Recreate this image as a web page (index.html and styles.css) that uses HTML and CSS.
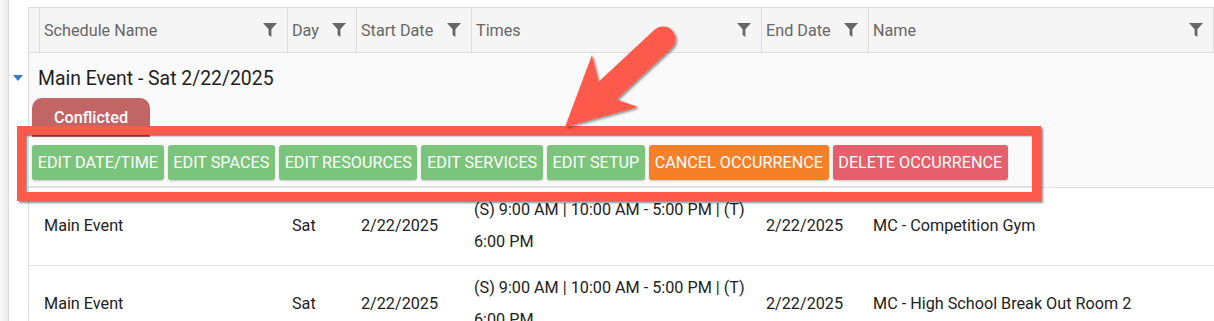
FILE: index.html
```html
<!DOCTYPE html>
<html>
<head>
<meta charset="utf-8">
<title>Occurrences</title>
<link rel="stylesheet" href="styles.css">
</head>
<body>
<div class="page">
  <div class="rail"></div>
  <div class="main">
    <div class="grid">
      <!-- header -->
      <div class="row head">
        <div class="cell"></div>
        <div class="cell">Schedule Name <svg class="filter" viewBox="0 0 14 14"><path d="M0 0H14L8.4 6.2V14L5.6 12V6.2Z"/></svg></div>
        <div class="cell">Day <svg class="filter" viewBox="0 0 14 14"><path d="M0 0H14L8.4 6.2V14L5.6 12V6.2Z"/></svg></div>
        <div class="cell">Start Date <svg class="filter" viewBox="0 0 14 14"><path d="M0 0H14L8.4 6.2V14L5.6 12V6.2Z"/></svg></div>
        <div class="cell">Times <svg class="filter" viewBox="0 0 14 14"><path d="M0 0H14L8.4 6.2V14L5.6 12V6.2Z"/></svg></div>
        <div class="cell">End Date <svg class="filter" viewBox="0 0 14 14"><path d="M0 0H14L8.4 6.2V14L5.6 12V6.2Z"/></svg></div>
        <div class="cell">Name <svg class="filter" viewBox="0 0 14 14"><path d="M0 0H14L8.4 6.2V14L5.6 12V6.2Z"/></svg></div>
      </div>

      <!-- group -->
      <div class="group">
        <div class="group-title"><span class="caret"></span>Main Event - Sat 2/22/2025</div>
        <div class="tab">Conflicted</div>
        <div class="toolbar">
          <button class="btn green">Edit Date/Time</button>
          <button class="btn green">Edit Spaces</button>
          <button class="btn green">Edit Resources</button>
          <button class="btn green">Edit Services</button>
          <button class="btn green">Edit Setup</button>
          <button class="btn orange">Cancel Occurrence</button>
          <button class="btn pink">Delete Occurrence</button>
        </div>
      </div>

      <!-- rows -->
      <div class="row data">
        <div class="cell"></div>
        <div class="cell">Main Event</div>
        <div class="cell">Sat</div>
        <div class="cell">2/22/2025</div>
        <div class="cell times">(S) 9:00 AM | 10:00 AM - 5:00 PM | (T) 6:00 PM</div>
        <div class="cell">2/22/2025</div>
        <div class="cell">MC - Competition Gym</div>
      </div>
      <div class="row data">
        <div class="cell"></div>
        <div class="cell">Main Event</div>
        <div class="cell">Sat</div>
        <div class="cell">2/22/2025</div>
        <div class="cell times">(S) 9:00 AM | 10:00 AM - 5:00 PM | (T) 6:00 PM</div>
        <div class="cell">2/22/2025</div>
        <div class="cell">MC - High School Break Out Room 2</div>
      </div>
    </div>
  </div>
</div>

<!-- annotation -->
<div class="callout"></div>
<svg class="arrow" viewBox="540 15 160 125" width="160" height="125">
  <defs>
    <filter id="sh" x="-20%" y="-20%" width="140%" height="140%">
      <feDropShadow dx="1.5" dy="1.5" stdDeviation="1.2" flood-color="#000" flood-opacity="0.45"/>
    </filter>
  </defs>
  <g filter="url(#sh)" fill="#fd5a4b">
    <line x1="663" y1="39" x2="606" y2="92" stroke="#fd5a4b" stroke-width="25" stroke-linecap="round"/>
    <polygon points="592,55 599,83 618,100 638,107 565,127"/>
  </g>
</svg>
</body>
</html>
```

FILE: styles.css
```css
body {
  margin: 0;
  font-family: Roboto, "Liberation Sans", sans-serif;
  font-size: 16.2px;
  color: #222;
  background: #fff;
  overflow: hidden;
}

.page {
  display: flex;
  padding-top: 7px;
  height: 314px;
  overflow: hidden;
}

.rail {
  width: 8px;
  margin-top: -7px;
  background: linear-gradient(to right, #f7f7f7, #ececec);
  border-right: 1px solid #dcdcdc;
  flex: none;
}

.main {
  flex: 1;
  padding-left: 19px;
}

.grid {
  border-left: 1px solid #dcdcdc;
  border-top: 1px solid #dcdcdc;
}

.row {
  display: grid;
  grid-template-columns: 11px 248px 69px 115px 290px 107px 1fr;
}

.cell {
  box-sizing: border-box;
  padding: 0 4px;
  display: flex;
  align-items: center;
}

.head {
  height: 44px;
  background: #f5f5f5;
  border-bottom: 1px solid #dcdcdc;
  color: #676767;
}
.head .cell {
  border-right: 1px solid #dcdcdc;
  justify-content: space-between;
  padding-right: 10px;
}
.head .cell:first-child { padding: 0; }

.filter {
  width: 14px;
  height: 14px;
  fill: #666;
  flex: none;
}

.group {
  background: #fafafa;
  border-bottom: 1px solid #e2e2e2;
}

.group-title {
  height: 45px;
  box-sizing: border-box;
  padding: 5px 0 0 9px;
  display: flex;
  align-items: center;
  font-size: 19.4px;
  color: #1e1e1e;
}

.caret {
  width: 0;
  height: 0;
  border-left: 5px solid transparent;
  border-right: 5px solid transparent;
  border-top: 6px solid #3a7bc8;
  margin-left: -25px;
  margin-right: 15px;
}

.tab {
  width: 118px;
  height: 39px;
  margin-left: 3px;
  background: #c26565;
  border-radius: 10px 10px 0 0;
  color: #fff;
  font-weight: 500;
  display: flex;
  align-items: center;
  justify-content: center;
}

.toolbar {
  display: flex;
  gap: 4px;
  width: 1003px;
  box-sizing: border-box;
  padding: 8px 3px 6px;
  border-bottom: 1px solid #dedede;
  background: #fafafa;
}

.btn {
  height: 35px;
  padding: 0 5.7px;
  border: 0;
  border-radius: 3px;
  font-family: Roboto, "Liberation Sans", sans-serif;
  font-size: 16.2px;
  color: #fff;
  text-transform: uppercase;
  box-shadow: 0 1px 2px rgba(0, 0, 0, 0.2);
}
.green  { background: #7bc47b; }
.orange { background: #f4812a; }
.pink   { background: #e4606d; }

.data {
  height: 77px;
  border-bottom: 1px solid #e4e4e4;
  background: #fff;
  line-height: 32px;
}
.data .cell { padding-bottom: 2px; }
.data .times { padding-left: 2px; }

.callout {
  position: absolute;
  left: 17px;
  top: 126px;
  width: 1024px;
  height: 75px;
  box-sizing: border-box;
  border: 9px solid #fd5a4b;
  box-shadow: 2px 2px 2px rgba(0, 0, 0, 0.45), inset 1px 1px 2px rgba(0, 0, 0, 0.55);
}

.arrow {
  position: absolute;
  left: 540px;
  top: 15px;
  overflow: visible;
}
```
